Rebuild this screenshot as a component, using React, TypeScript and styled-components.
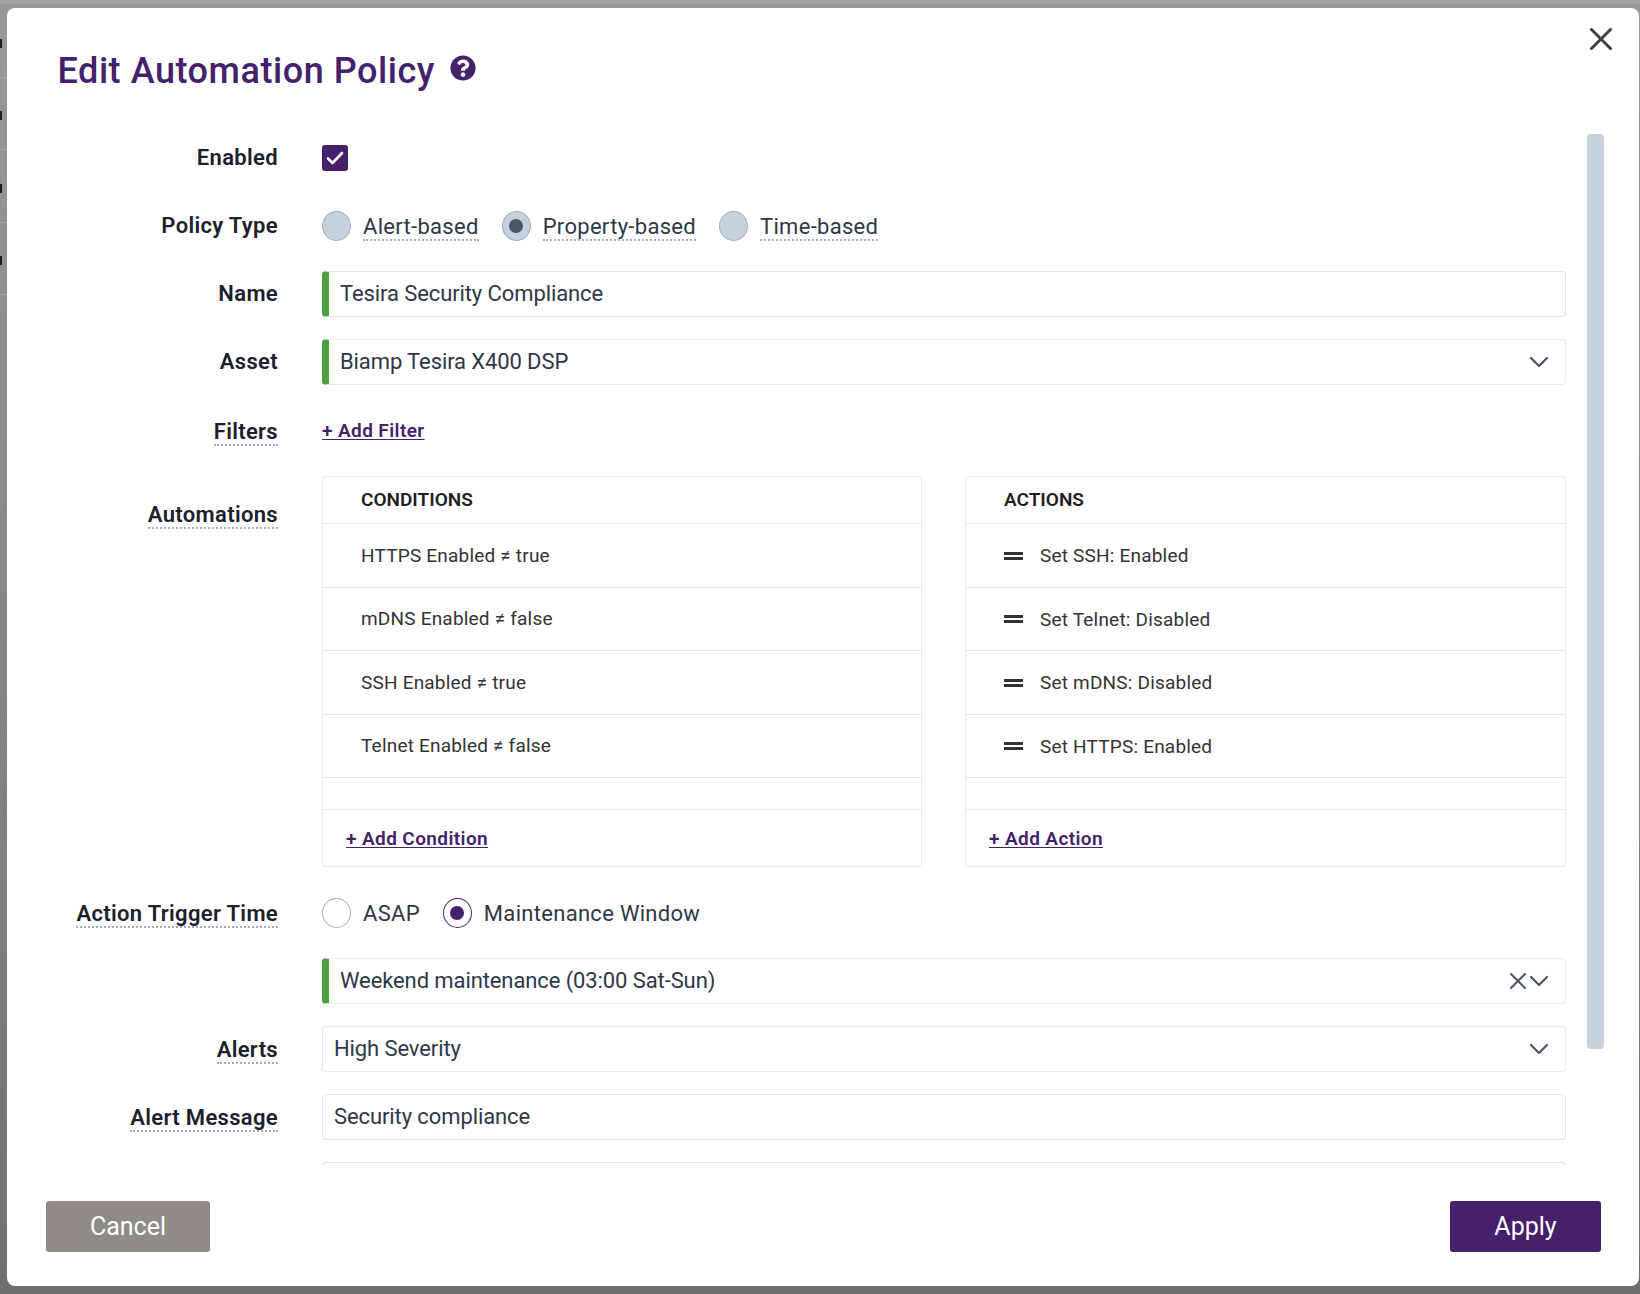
import React from "react";
import styled, { createGlobalStyle } from "styled-components";
import { FaQuestionCircle } from "react-icons/fa";

const Global = createGlobalStyle`
  html, body { margin: 0; padding: 0; }
  body { font-family: Roboto, "Liberation Sans", sans-serif; color: #2d3748; }
  * { box-sizing: border-box; }
`;

const Page = styled.div`
  position: relative;
  width: 1640px;
  height: 1294px;
  overflow: hidden;
  padding: 8px 1px 8.5px 7px;
  background: linear-gradient(180deg, #a2a2a2 0, #a2a2a2 3px, #989898 5px, #909090 300px, #7f7f7f 900px, #6f6f6f 1294px);
`;
const Behind = styled.div`
  position: absolute;
  left: 0;
  top: 5px;
  width: 7px;
`;
const BehindRow = styled.div`
  height: 72.5px;
  border-bottom: 1px solid #a6a6a6;
  display: flex;
  align-items: center;
`;
const BehindMark = styled.span`
  width: 2px;
  height: 9px;
  background: #1c1c1c;
  margin-top: 5px;
`;
const Modal = styled.div`
  position: relative;
  height: 100%;
  background: #fff;
  border-radius: 8px;
  display: flex;
  flex-direction: column;
`;
const Header = styled.header`
  height: 127px;
  padding: 39px 0 0 50.5px;
  display: flex;
  align-items: flex-start;
  flex: none;
`;
const Title = styled.h1`
  margin: 0;
  font-size: 36px;
  line-height: 48px;
  font-weight: 500;
  letter-spacing: 0.55px;
  color: #44216a;
`;
const HelpIcon = styled(FaQuestionCircle)`
  width: 26px;
  height: 26px;
  color: #44216a;
  margin: 8px 0 0 15.5px;
`;
const CloseButton = styled.button`
  position: absolute;
  top: 20px;
  right: 27px;
  width: 22px;
  height: 22px;
  padding: 0;
  border: 0;
  background: none;
  color: #3f3f3f;
  display: flex;
`;
const Scrollbar = styled.div`
  position: absolute;
  top: 126px;
  left: 1580px;
  width: 17px;
  height: 915px;
  background: #c6d1de;
  border-radius: 4px;
`;
const Body = styled.div`
  flex: 1;
  min-height: 0;
  overflow: hidden;
  padding-right: 73px;
  display: flex;
  flex-direction: column;
  gap: 22px;
`;
const Row = styled.div<{ $h?: number; $top?: boolean }>`
  display: grid;
  grid-template-columns: 271px 1244px;
  column-gap: 44px;
  flex: none;
  height: ${(p) => (p.$h ? `${p.$h}px` : "auto")};
  align-items: ${(p) => (p.$top ? "start" : "center")};
`;
const LabelCell = styled.div<{ $top?: boolean }>`
  text-align: right;
  padding-top: ${(p) => (p.$top ? "23px" : "0")};
`;
const Label = styled.span<{ $tip?: boolean }>`
  display: inline-block;
  font-size: 22px;
  line-height: ${(p) => (p.$tip ? "24px" : "28px")};
  padding-top: ${(p) => (p.$tip ? "4px" : "0")};
  font-weight: 600;
  letter-spacing: 0.33px;
  color: #1a202c;
  border-bottom: ${(p) => (p.$tip ? "2px dotted #a0aec0" : "0")};
`;
const Check = styled.span`
  width: 26px;
  height: 26px;
  border-radius: 3px;
  background: #44216a;
  display: flex;
  align-items: center;
  justify-content: center;
`;
const RadioGroup = styled.div`
  display: flex;
  align-items: center;
`;
const RadioItem = styled.label`
  display: flex;
  align-items: center;
  margin-right: 23px;
`;
const RadioCircle = styled.span<{ $variant: "grey" | "greyOn" | "white" | "on" }>`
  width: 29px;
  height: 30px;
  border-radius: 50%;
  flex: none;
  display: flex;
  align-items: center;
  justify-content: center;
  border: 1.5px solid ${(p) => (p.$variant === "on" ? "#44216a" : "#a0aec0")};
  background: ${(p) => (p.$variant === "grey" || p.$variant === "greyOn" ? "#c6d1de" : "#fff")};
  &::after {
    content: "";
    display: ${(p) => (p.$variant === "greyOn" || p.$variant === "on" ? "block" : "none")};
    width: 14px;
    height: 14px;
    border-radius: 50%;
    background: ${(p) => (p.$variant === "on" ? "#44216a" : "#4a5568")};
  }
`;
const RadioText = styled.span<{ $tip?: boolean }>`
  margin-left: 12px;
  font-size: 22px;
  line-height: 24px;
  padding-top: 4px;
  letter-spacing: 0.3px;
  color: #2d3748;
  border-bottom: 2px ${(p) => (p.$tip ? "dotted #a0aec0" : "solid transparent")};
`;
const Field = styled.div<{ $required?: boolean; $strong?: boolean }>`
  height: 46px;
  width: 100%;
  background: #fff;
  border: 1px solid ${(p) => (p.$strong ? "#dfe3e8" : "#e8ebef")};
  border-left: ${(p) => (p.$required ? "7px solid #4a9f3f" : "1px solid #dfe3e8")};
  border-radius: 4px;
  padding: 0 16px 1px 11px;
  display: flex;
  align-items: center;
  font-size: 22px;
  letter-spacing: -0.1px;
  color: #2d3748;
`;
const FieldText = styled.span`
  flex: 1;
`;
const FieldIcons = styled.span`
  display: flex;
  align-items: center;
  gap: 2px;
  color: #4a5568;
`;
const AddLink = styled.a`
  font-size: 19px;
  line-height: 24px;
  font-weight: 600;
  letter-spacing: 0.4px;
  color: #44216a;
  text-decoration: underline;
  text-underline-offset: 2px;
`;
const Panels = styled.div`
  display: grid;
  grid-template-columns: 600px 601px;
  column-gap: 43px;
`;
const Panel = styled.section`
  height: 391px;
  border: 1px solid #e8ebef;
  border-radius: 4px;
  display: flex;
  flex-direction: column;
`;
const PanelHead = styled.div`
  height: 47px;
  flex: none;
  padding: 0 0 2px 38px;
  border-bottom: 1px solid #e8ebef;
  display: flex;
  align-items: center;
  font-size: 19px;
  font-weight: 600;
  color: #1f1f1f;
`;
const PanelRow = styled.div`
  height: 63.5px;
  flex: none;
  padding-left: 38px;
  border-bottom: 1px solid #e2e8f0;
  display: flex;
  align-items: center;
  font-size: 19px;
  letter-spacing: 0.2px;
  color: #333;
`;
const ActionRow = styled(PanelRow)`
  padding-top: 1px;
`;
const PanelSpacer = styled.div`
  height: 32px;
  flex: none;
  border-bottom: 1px solid #e8ebef;
`;
const PanelFoot = styled.div`
  flex: 1;
  padding: 1px 0 0 23px;
  display: flex;
  align-items: center;
`;
const Grip = styled.span`
  width: 19px;
  height: 8px;
  margin-right: 17px;
  border-top: 3px solid #333;
  border-bottom: 3px solid #333;
  flex: none;
`;
const Footer = styled.footer`
  flex: none;
  height: 120.5px;
  padding: 36px 38px 0 39px;
  display: flex;
  justify-content: space-between;
`;
const Button = styled.button<{ $primary?: boolean }>`
  height: 51px;
  width: ${(p) => (p.$primary ? "151px" : "164px")};
  border: 0;
  border-radius: 3px;
  background: ${(p) => (p.$primary ? "#44216a" : "#8f8b86")};
  color: #fff;
  font-family: inherit;
  font-size: 25px;
`;

const Chevron = () => (
  <svg width="20" height="12" viewBox="0 0 20 12" fill="none" stroke="currentColor" strokeWidth="2.2" strokeLinecap="round" strokeLinejoin="round">
    <path d="M2 2l8 8 8-8" />
  </svg>
);
const Cross = () => (
  <svg width="18" height="18" viewBox="0 0 18 18" fill="none" stroke="currentColor" strokeWidth="2" strokeLinecap="round">
    <path d="M2 2l14 14M16 2L2 16" />
  </svg>
);

const conditions = ["HTTPS Enabled ≠ true", "mDNS Enabled ≠ false", "SSH Enabled ≠ true", "Telnet Enabled ≠ false"];
const actions = ["Set SSH: Enabled", "Set Telnet: Disabled", "Set mDNS: Disabled", "Set HTTPS: Enabled"];

export default function App() {
  return (
    <Page>
      <Global />
      <Behind>
        {[0, 1, 2, 3].map((i) => (
          <BehindRow key={i}>
            <BehindMark />
          </BehindRow>
        ))}
      </Behind>
      <Modal>
        <Header>
          <Title>Edit Automation Policy</Title>
          <HelpIcon />
        </Header>
        <CloseButton aria-label="Close">
          <svg width="22" height="22" viewBox="0 0 22 22" fill="none" stroke="currentColor" strokeWidth="3" strokeLinecap="round">
            <path d="M1.5 1.5l19 19M20.5 1.5l-19 19" />
          </svg>
        </CloseButton>
        <Scrollbar />
        <Body>
          <Row $h={46}>
            <LabelCell><Label>Enabled</Label></LabelCell>
            <Check>
              <svg width="18" height="14" viewBox="0 0 18 14" fill="none" stroke="#fff" strokeWidth="2.6" strokeLinecap="round" strokeLinejoin="round">
                <path d="M2 7.5l4.5 4.5L16 2" />
              </svg>
            </Check>
          </Row>
          <Row $h={46}>
            <LabelCell><Label>Policy Type</Label></LabelCell>
            <RadioGroup>
              <RadioItem><RadioCircle $variant="grey" /><RadioText $tip>Alert-based</RadioText></RadioItem>
              <RadioItem><RadioCircle $variant="greyOn" /><RadioText $tip>Property-based</RadioText></RadioItem>
              <RadioItem><RadioCircle $variant="grey" /><RadioText $tip>Time-based</RadioText></RadioItem>
            </RadioGroup>
          </Row>
          <Row $h={46}>
            <LabelCell><Label>Name</Label></LabelCell>
            <Field $required $strong>Tesira Security Compliance</Field>
          </Row>
          <Row $h={46}>
            <LabelCell><Label>Asset</Label></LabelCell>
            <Field $required>
              <FieldText>Biamp Tesira X400 DSP</FieldText>
              <FieldIcons><Chevron /></FieldIcons>
            </Field>
          </Row>
          <Row $h={47}>
            <LabelCell><Label $tip>Filters</Label></LabelCell>
            <div><AddLink>+ Add Filter</AddLink></div>
          </Row>
          <Row $top>
            <LabelCell $top><Label $tip>Automations</Label></LabelCell>
            <Panels>
              <Panel>
                <PanelHead>CONDITIONS</PanelHead>
                {conditions.map((c) => <PanelRow key={c}>{c}</PanelRow>)}
                <PanelSpacer />
                <PanelFoot><AddLink>+ Add Condition</AddLink></PanelFoot>
              </Panel>
              <Panel>
                <PanelHead>ACTIONS</PanelHead>
                {actions.map((a) => <ActionRow key={a}><Grip />{a}</ActionRow>)}
                <PanelSpacer />
                <PanelFoot><AddLink>+ Add Action</AddLink></PanelFoot>
              </Panel>
            </Panels>
          </Row>
          <Row $h={47}>
            <LabelCell><Label $tip>Action Trigger Time</Label></LabelCell>
            <RadioGroup>
              <RadioItem><RadioCircle $variant="white" /><RadioText>ASAP</RadioText></RadioItem>
              <RadioItem><RadioCircle $variant="on" /><RadioText>Maintenance Window</RadioText></RadioItem>
            </RadioGroup>
          </Row>
          <Row $h={46}>
            <LabelCell />
            <Field $required>
              <FieldText>Weekend maintenance (03:00 Sat-Sun)</FieldText>
              <FieldIcons><Cross /><Chevron /></FieldIcons>
            </Field>
          </Row>
          <Row $h={46}>
            <LabelCell><Label $tip>Alerts</Label></LabelCell>
            <Field>
              <FieldText>High Severity</FieldText>
              <FieldIcons><Chevron /></FieldIcons>
            </Field>
          </Row>
          <Row $h={46}>
            <LabelCell><Label $tip>Alert Message</Label></LabelCell>
            <Field $strong>Security compliance</Field>
          </Row>
          <Row $h={46}>
            <LabelCell />
            <Field $strong />
          </Row>
        </Body>
        <Footer>
          <Button>Cancel</Button>
          <Button $primary>Apply</Button>
        </Footer>
      </Modal>
    </Page>
  );
}
